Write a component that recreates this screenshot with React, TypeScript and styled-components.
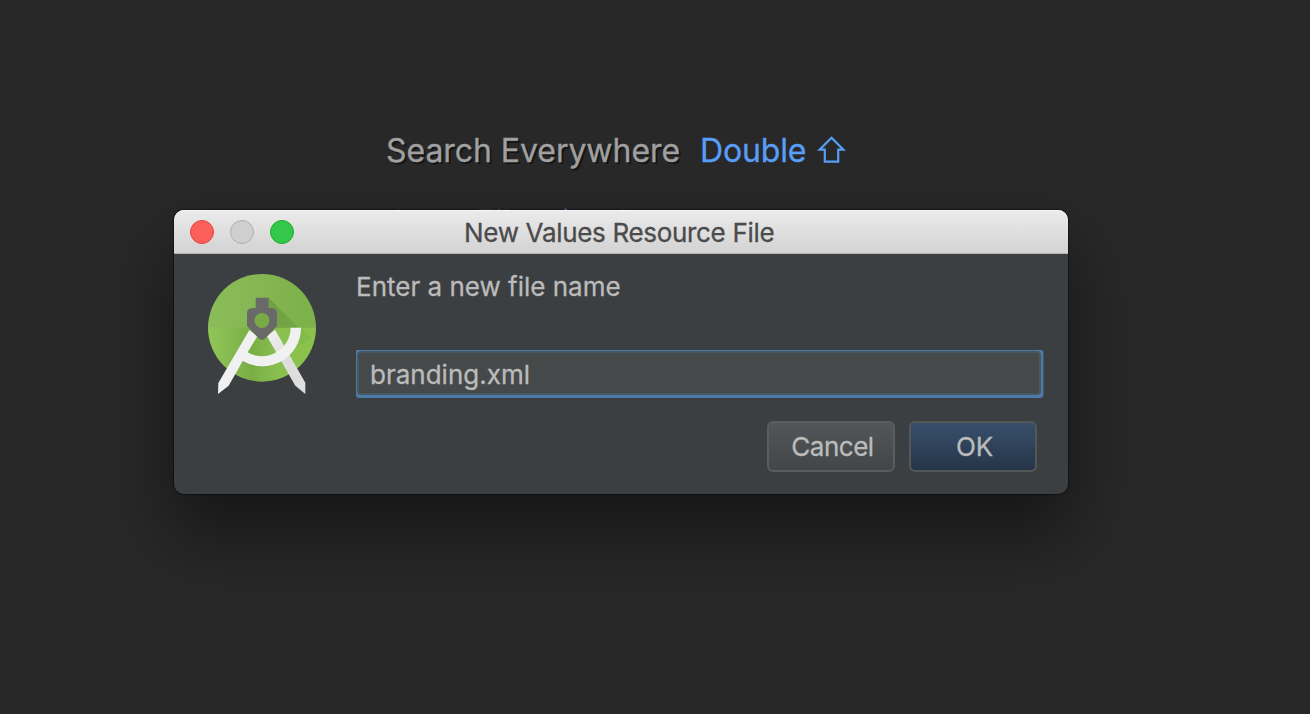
import React from "react";
import styled, { createGlobalStyle } from "styled-components";

const GlobalStyle = createGlobalStyle`
  * { box-sizing: border-box; }
  body {
    margin: 0;
    background: #282828;
    font-family: Inter, "Liberation Sans", sans-serif;
    font-weight: 400;
    -webkit-text-stroke: 0.3px currentColor;
    overflow: hidden;
  }
`;

const Desktop = styled.main`
  position: relative;
  width: 1310px;
  height: 714px;
  overflow: hidden;
  background: #282828;
`;

const Hints = styled.section`
  padding: 131px 0 0 386px;
`;

const HintRow = styled.div`
  display: flex;
  align-items: center;
  height: 40px;
  margin-bottom: 32px;
  font-size: 32px;
  line-height: 40px;
  white-space: pre;
`;

const HintName = styled.span<{ $width: number }>`
  width: ${(p) => p.$width}px;
  letter-spacing: -0.05px;
  color: #a0a0a0;
  text-shadow: 2px 2px 0 #151515;
`;

const Shortcut = styled.span`
  display: flex;
  align-items: center;
  letter-spacing: -0.15px;
  color: #589df6;
`;

const KeyGlyph = styled.svg<{ $gap: number }>`
  flex: none;
  margin: 0 0 3px ${(p) => p.$gap}px;
  fill: none;
  stroke: #589df6;
`;

const Dialog = styled.section`
  position: absolute;
  left: 174px;
  top: 210px;
  width: 894px;
  height: 284px;
  border-radius: 10px;
  background: #3c3f41;
  box-shadow: 0 0 1px 1px rgba(0, 0, 0, 0.4), 0 38px 72px rgba(0, 0, 0, 0.48);
`;

const TitleBar = styled.header`
  display: grid;
  grid-template-columns: 274px 1fr;
  align-items: center;
  height: 44px;
  padding-left: 16px;
  border-radius: 10px 10px 0 0;
  border-bottom: 1px solid #b4b4b4;
  background: linear-gradient(#ebebeb, #d3d3d3);
  box-shadow: inset 0 1px 0 #f6f6f6;
`;

const WindowControls = styled.div`
  display: flex;
  gap: 16px;
`;

const Light = styled.span<{ $fill: string; $edge: string }>`
  width: 24px;
  height: 24px;
  border-radius: 50%;
  border: 1px solid ${(p) => p.$edge};
  background: ${(p) => p.$fill};
`;

const Title = styled.h1`
  margin: 0;
  padding-top: 3px;
  color: #4b4b4b;
  font-size: 26px;
  font-weight: 400;
  line-height: 32px;
  letter-spacing: -0.32px;
  white-space: nowrap;
`;

const Body = styled.div`
  display: grid;
  grid-template-columns: 108px 1fr;
  column-gap: 40px;
  padding: 20px 24px 0 34px;
`;

const Form = styled.form`
  display: flex;
  flex-direction: column;
`;

const Label = styled.label`
  height: 32px;
  margin: -3px 0 47px;
  color: #bbbbbb;
  font-size: 26px;
  line-height: 32px;
  white-space: nowrap;
`;

const FieldFrame = styled.div`
  width: 688px;
  height: 48px;
  padding: 1px 2px 3px 1px;
  border-right: 1px solid #42566a;
  border-radius: 1px 3px 4px 3px;
  background: #4d7ba8;
`;

const Field = styled.input`
  display: block;
  width: 100%;
  height: 100%;
  padding: 2px 0 0 11px;
  border: 2px solid #465761;
  border-radius: 4px;
  outline: none;
  background: #45494a;
  color: #bbbbbb;
  font: 400 26px/36px Inter, "Liberation Sans", sans-serif;
  letter-spacing: 0;
`;

const Actions = styled.div`
  display: flex;
  justify-content: flex-end;
  gap: 14px;
  padding: 23px 7px 0 0;
`;

const Button = styled.button<{ $primary?: boolean }>`
  width: 128px;
  height: 51px;
  padding: 1px 0 0 3px;
  border: 2px solid ${(p) => (p.$primary ? "#535758" : "#5a5d5c")};
  border-radius: 6px;
  background: ${(p) =>
    p.$primary
      ? "linear-gradient(#384f6b, #263548) padding-box"
      : "linear-gradient(#525658, #424648) padding-box"};
  color: #bbbbbb;
  font: 400 26px/32px Inter, "Liberation Sans", sans-serif;
  letter-spacing: ${(p) => (p.$primary ? "-0.1px" : "-0.5px")};
`;

const ShiftKey = ({ gap }: { gap: number }) => (
  <KeyGlyph $gap={gap} width="29" height="30" viewBox="0 0 29 30" strokeWidth="2.2">
    <path d="M14.5 2.7 26.4 14.6h-5.2v12H7.8v-12H2.6z" />
  </KeyGlyph>
);

const CommandKey = ({ gap }: { gap: number }) => (
  <KeyGlyph $gap={gap} width="26" height="30" viewBox="0 0 26 30" strokeWidth="2">
    <path d="M9 12h8v8H9zM9 12H6a4 4 0 1 1 3-4zM17 12V8a4 4 0 1 1 3 4zM9 20v3a4 4 0 1 1-3-3zM17 20h3a4 4 0 1 1-3 3z" />
  </KeyGlyph>
);

const StudioLogo = () => (
  <svg width="108" height="121" viewBox="36 30 324 363">
    <defs>
      <linearGradient id="upper" x1="0" y1="0" x2="1" y2="0">
        <stop offset="0" stopColor="#8bbc5b" />
        <stop offset="1" stopColor="#7cb048" />
      </linearGradient>
      <linearGradient id="lower" x1="0" y1="0" x2="1" y2="0">
        <stop offset="0" stopColor="#91c658" />
        <stop offset="0.28" stopColor="#82b64c" />
        <stop offset="0.4" stopColor="#79ae45" />
        <stop offset="0.65" stopColor="#89c04f" />
        <stop offset="1" stopColor="#8bc34a" />
      </linearGradient>
      <linearGradient id="cast" x1="218" y1="101" x2="310" y2="191" gradientUnits="userSpaceOnUse">
        <stop offset="0" stopColor="#639339" stopOpacity="0.65" />
        <stop offset="1" stopColor="#6b9d40" stopOpacity="0.55" />
      </linearGradient>
      <linearGradient id="rightLeg" x1="220" y1="205" x2="270" y2="280" gradientUnits="userSpaceOnUse">
        <stop offset="0" stopColor="#f0f0f0" />
        <stop offset="1" stopColor="#dedede" />
      </linearGradient>
    </defs>
    <path d="M36 192a162 162 0 0 1 324 0z" fill="url(#upper)" />
    <path d="M36 191a162 162 0 0 0 324 0z" fill="url(#lower)" />
    <path d="M218 101 308 191H225z" fill="url(#cast)" />
    <path d="M316 191 348 223 322 241 304 235z" fill="#7eb347" opacity="0.5" />
    <path d="m213 217 24-20 91 159v34l-30-25z" fill="url(#rightLeg)" />
    <path d="m140 294 15-25c41 22 83 12 109-17l14 22c-36 37-90 48-138 20z" fill="#55802f" opacity="0.22" />
    <path d="M160 198 67 357l-1 33 32-25 42-74a116 116 0 0 0 175-100h-31a86 86 0 0 1-129 74l29-48z" fill="#f1f1f1" />
    <circle cx="198" cy="169" r="23" fill="#78ab45" />
    <path
      fillRule="evenodd"
      fill="#696969"
      d="M179 101h39v31h10q15 1 15 16v38l-35 37q-10 10-20 0l-35-37v-38q0-15 15-16h11zM198 147a22 22 0 1 0 0 45a22 22 0 1 0 0-45z"
    />
  </svg>
);

export default function App() {
  return (
    <>
      <GlobalStyle />
      <Desktop>
        <Hints>
          <HintRow>
            <HintName $width={314}>Search Everywhere</HintName>
            <Shortcut>
              Double
              <ShiftKey gap={11} />
            </Shortcut>
          </HintRow>
          <HintRow>
            <HintName $width={165}>Go to File</HintName>
            <Shortcut>
              <ShiftKey gap={0} />
              <CommandKey gap={5} />
              O
            </Shortcut>
          </HintRow>
        </Hints>
        <Dialog role="dialog" aria-labelledby="dialog-title">
          <TitleBar>
            <WindowControls>
              <Light $fill="#fc605b" $edge="#e2463f" />
              <Light $fill="#cfcfcf" $edge="#afafaf" />
              <Light $fill="#34c84a" $edge="#1dac2b" />
            </WindowControls>
            <Title id="dialog-title">New Values Resource File</Title>
          </TitleBar>
          <Body>
            <StudioLogo />
            <Form>
              <Label htmlFor="file-name">Enter a new file name</Label>
              <FieldFrame>
                <Field id="file-name" defaultValue="branding.xml" spellCheck={false} />
              </FieldFrame>
              <Actions>
                <Button type="button">Cancel</Button>
                <Button type="button" $primary>OK</Button>
              </Actions>
            </Form>
          </Body>
        </Dialog>
      </Desktop>
    </>
  );
}
